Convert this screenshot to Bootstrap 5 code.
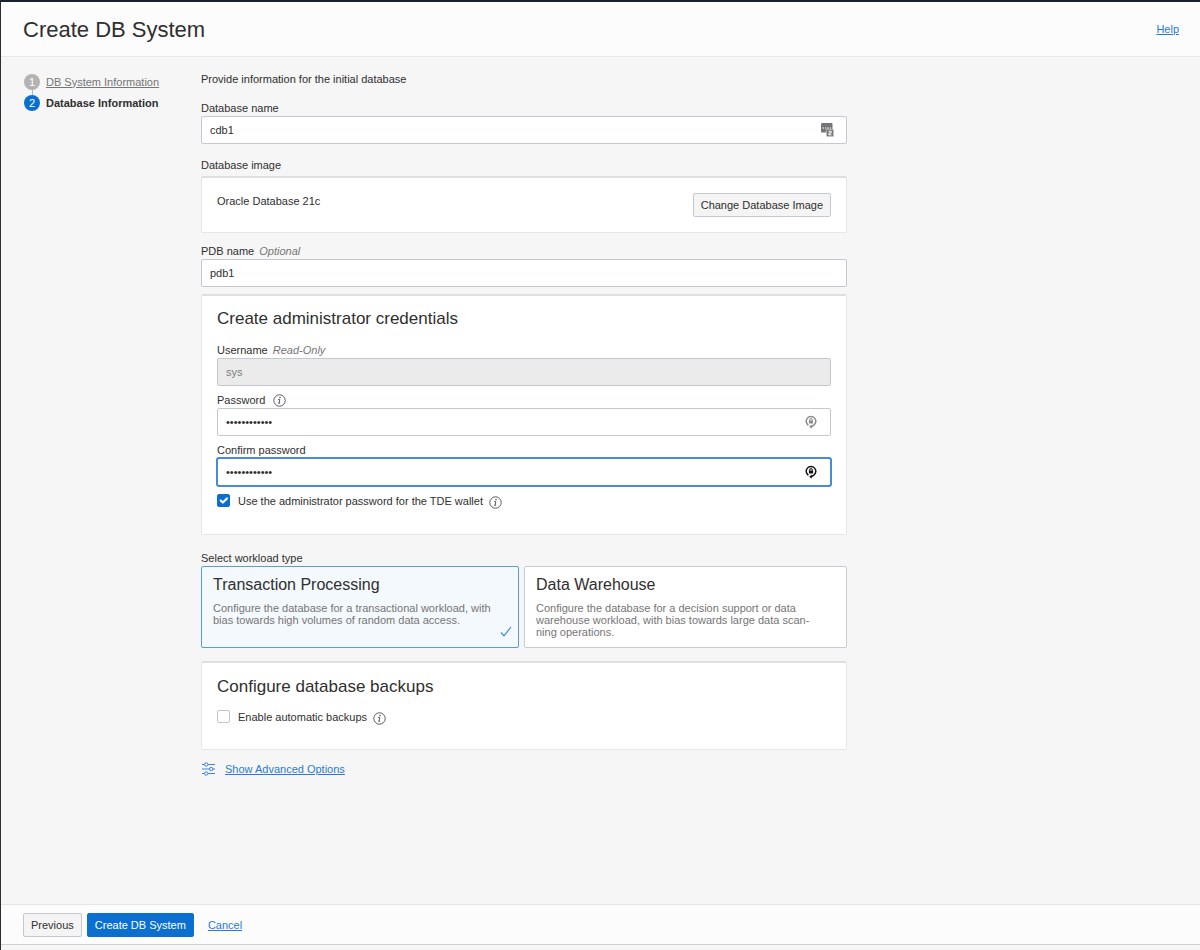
<!DOCTYPE html>
<html lang="en">
<head>
<meta charset="utf-8">
<meta name="viewport" content="width=device-width, initial-scale=1">
<title>Create DB System</title>
<link href="https://cdn.jsdelivr.net/npm/bootstrap@5.3.0/dist/css/bootstrap.min.css" rel="stylesheet">
<style>
  :root {
    --ink: #2f2f2f;
    --muted: #757575;
    --accent: #0b6fd0;
    --link: #2a7ad8;
    --page: #f6f6f6;
    --line: #e3e4e6;
  }
  body {
    font-family: "Liberation Sans", Arial, sans-serif;
    font-size: 11px;
    line-height: 16px;
    color: var(--ink);
    background: var(--page);
    border-top: 2px solid #1c2030;
    border-left: 1px solid #2b2c34;
  }
  a { color: var(--link); }
  .page-head { background: #fcfcfc; border-bottom: 1px solid #e8e8e8; padding: 12px 21px 11px 22px; }
  .page-head h1 { font-size: 22px; line-height: 31px; font-weight: 400; }
  .page-head a { padding-top: 7px; }
  .page-foot { background: #fcfcfc; border-top: 1px solid var(--line); border-bottom: 1px solid #cfcfcf; padding: 8px 22px 7px; margin-bottom: 5px; }
  .page-body { padding: 14px 22px; }

  .steps { flex: 0 0 178px; padding-left: 1px; }
  .steps li { display: flex; align-items: center; gap: 6px; height: 21px; position: relative; }
  .steps li + li::before { content: ""; position: absolute; left: 8px; top: -3px; height: 6px; border-left: 1px solid #b5b5b5; }
  .steps a { color: #757575; }
  .step-no { width: 16px; height: 16px; border-radius: 50%; background: #b3b3b3; color: #fff; text-align: center; font-size: 11px; font-weight: 400; }
  .active .step-no { background: var(--accent); }

  .wizard-form { flex: 0 1 646px; min-width: 0; }
  .field-wide { margin-top: 13px; }
  .field-mid { margin-top: 10px; }
  .field-tight { margin-top: 6px; }
  .form-label { display: block; margin: 0; font-size: 11px; }
  .hint { color: var(--muted); font-style: italic; margin-left: 2px; }
  .form-control {
    height: 28px; padding: 0 8px; font-size: 11px; line-height: 16px;
    color: var(--ink); border: 1px solid #c4c8cf; border-radius: 2px;
  }
  .form-control:disabled { background: #ebebeb; color: #7c7c7c; opacity: 1; }
  .form-control:focus, .form-control.current { border-color: #4a8bd6; box-shadow: 0 0 0 1px #4a8bd6; color: var(--ink); }
  .field-icon { position: absolute; right: 12px; top: 7px; color: #757575; }
  .key-icon { right: 14px; color: #8a8a8a; }
  .current + .key-icon { color: #111; }

  .panel { background: #fff; border: 1px solid #e6e6e6; border-top: 2px solid #dfdfe1; border-radius: 2px; padding: 15px; }
  .panel-image { margin-top: 3px; }
  .panel-admin { margin-top: 7px; padding: 13px 15px 16px; }
  .panel-backup { margin-top: 13px; padding: 14px 15px 16px; }
  .panel h2 { font-size: 17px; line-height: 20px; font-weight: 400; margin: 0; }
  .tile-title { font-size: 16px; line-height: 20px; display: block; }
  .info-btn { border: 0; background: none; padding: 0; line-height: 0; color: #5a5a5a; }
  .check-row { display: flex; align-items: center; gap: 6px; margin: 6px 0 9px; }
  .panel-backup .check-row { margin-top: 11px; margin-bottom: 8px; }
  .check-row .form-check-input { width: 13px; height: 13px; margin: 0 2px 0 0; border: 1px solid #c4c4c4; border-radius: 2px; }
  .check-row .form-check-input:checked { background-color: var(--accent); border-color: var(--accent); background-size: 14px 14px; }
  .check-row .info-btn { padding-top: 4px; }

  .btn-form { font-size: 11px; line-height: 16px; padding: 3px 7px; border-radius: 2px; background: #f4f4f4; border: 1px solid #c4c8cf; color: var(--ink); }
  .btn-go { background: var(--accent); border-color: var(--accent); color: #fff; margin-left: 5px; }
  .page-foot a { margin-left: 14px; }

  .workload { margin-top: 15px; }
  .tiles { display: grid; grid-template-columns: 318fr 323fr; gap: 5px; }
  .tile { position: relative; background: #fff; border: 1px solid #c8ccd1; border-radius: 2px; padding: 8px 11px; min-height: 82px; cursor: pointer; }
  .tile-text { color: var(--muted); line-height: 12px; margin-top: 7px; display: block; }
  .tile .tick { position: absolute; right: 6px; bottom: 10px; display: none; }
  .btn-check:checked + .tile { background: #f4f9fe; border-color: #5c9ade; }
  .btn-check:checked + .tile .tick { display: block; }
  .advanced { margin-top: 11px; }
</style>
</head>
<body class="d-flex flex-column min-vh-100">
<svg class="d-none" aria-hidden="true">
  <symbol id="i-info" viewBox="0 0 13 13">
    <circle cx="6.500" cy="6.500" r="5.700" fill="none" stroke="currentColor"/>
    <path d="M5.200 5.500h1.600L6.100 9.100M5.200 9.200h1.900" fill="none" stroke="currentColor"/>
    <circle cx="7" cy="3.600" r=".8" fill="currentColor"/>
  </symbol>
  <symbol id="i-key" viewBox="0 0 12 14">
    <path d="M3.400 10.300A4.800 4.800 0 1 1 8.600 10.300L6.400 11.700" fill="none" stroke="currentColor" stroke-width="1.500"/>
    <path d="M4.600 5.800V5a1.400 1.400 0 0 1 2.800 0v.8" fill="none" stroke="currentColor"/>
    <rect x="3.900" y="5.600" width="4.200" height="3" rx=".4" fill="currentColor"/>
    <path d="M6.800 9.600v4.200L4.200 11.700z" fill="currentColor"/>
  </symbol>
</svg>

<header class="page-head d-flex justify-content-between align-items-start">
  <h1 class="m-0">Create DB System</h1>
  <a href="#">Help</a>
</header>

<main class="page-body d-flex flex-grow-1 align-items-start">
  <nav class="steps" aria-label="Steps">
    <ol class="list-unstyled m-0">
      <li><span class="step-no">1</span><a href="#">DB System Information</a></li>
      <li class="active fw-bold"><span class="step-no">2</span><span>Database Information</span></li>
    </ol>
  </nav>

  <form class="wizard-form" id="wizard">
    <p class="mb-0">Provide information for the initial database</p>

    <div class="field-wide">
      <label class="form-label" for="dbname">Database name</label>
      <div class="position-relative">
        <input class="form-control" id="dbname" type="text" value="cdb1">
        <svg class="field-icon" width="14" height="14" viewBox="0 0 14 14" aria-hidden="true">
          <rect x="0" y="0" width="11.500" height="9.500" rx="1" fill="currentColor"/>
          <path d="M1.500 5h1.500M4 5h1.500M6.500 5H8M9 5h1" stroke="#fff" stroke-width="1.200"/>
          <rect x="5.300" y="6.300" width="7.400" height="7.400" rx="1" fill="currentColor" stroke="#fff" stroke-width=".5"/>
          <path d="M7.600 8.300h2.600v1.700H7.900v1.800h2.700" fill="none" stroke="#fff"/>
        </svg>
      </div>
    </div>

    <div class="field-wide">
      <div>Database image</div>
      <div class="panel panel-image d-flex justify-content-between align-items-start">
        <span>Oracle Database 21c</span>
        <button type="button" class="btn btn-form">Change Database Image</button>
      </div>
    </div>

    <div class="field-mid">
      <label class="form-label" for="pdbname">PDB name <span class="hint">Optional</span></label>
      <input class="form-control" id="pdbname" type="text" value="pdb1">
    </div>

    <section class="panel panel-admin">
      <h2>Create administrator credentials</h2>
      <div class="field-wide">
        <label class="form-label" for="user">Username <span class="hint">Read-Only</span></label>
        <input class="form-control" id="user" type="text" value="sys" disabled>
      </div>
      <div class="field-tight">
        <div class="d-flex align-items-center gap-2">
          <label class="form-label" for="pw">Password</label>
          <button type="button" class="info-btn" aria-label="About the password"><svg width="13" height="13"><use href="#i-info"/></svg></button>
        </div>
        <div class="position-relative">
          <input class="form-control" id="pw" type="password" value="Passw0rd#123">
          <svg class="field-icon key-icon" width="12" height="14" aria-hidden="true"><use href="#i-key"/></svg>
        </div>
      </div>
      <div class="field-tight">
        <label class="form-label" for="pw2">Confirm password</label>
        <div class="position-relative">
          <input class="form-control current" id="pw2" type="password" value="Passw0rd#123">
          <svg class="field-icon key-icon" width="12" height="14" aria-hidden="true"><use href="#i-key"/></svg>
        </div>
      </div>
      <div class="check-row">
        <input class="form-check-input" type="checkbox" id="tde" checked>
        <label for="tde">Use the administrator password for the TDE wallet</label>
        <button type="button" class="info-btn" aria-label="About the TDE wallet"><svg width="13" height="13"><use href="#i-info"/></svg></button>
      </div>
    </section>

    <fieldset class="workload">
      <legend class="form-label">Select workload type</legend>
      <div class="tiles">
        <input class="btn-check" type="radio" name="workload" id="oltp" checked>
        <label class="tile" for="oltp">
          <span class="tile-title">Transaction Processing</span>
          <span class="tile-text">Configure the database for a transactional workload, with<br>bias towards high volumes of random data access.</span>
          <svg class="tick" width="12" height="11" viewBox="0 0 12 11" aria-hidden="true"><path d="M1 6.500l3 3.300L11 1" fill="none" stroke="#3f8ae0" stroke-width="1.200"/></svg>
        </label>
        <input class="btn-check" type="radio" name="workload" id="dw">
        <label class="tile" for="dw">
          <span class="tile-title">Data Warehouse</span>
          <span class="tile-text">Configure the database for a decision support or data<br>warehouse workload, with bias towards large data scan-<br>ning operations.</span>
        </label>
      </div>
    </fieldset>

    <section class="panel panel-backup">
      <h2>Configure database backups</h2>
      <div class="check-row">
        <input class="form-check-input" type="checkbox" id="backup">
        <label for="backup">Enable automatic backups</label>
        <button type="button" class="info-btn" aria-label="About automatic backups"><svg width="13" height="13"><use href="#i-info"/></svg></button>
      </div>
    </section>

    <div class="advanced d-flex align-items-center gap-2">
      <svg width="16" height="14" viewBox="0 0 16 14" fill="none" stroke="#3f86d8" aria-hidden="true">
        <path d="M1 2.500h2.500M7 2.500h7M1 7h7.500M12 7h2M1 11.500h2.500M7 11.500h7"/>
        <circle cx="5.200" cy="2.500" r="1.700"/><circle cx="10.200" cy="7" r="1.700"/><circle cx="5.200" cy="11.500" r="1.700"/>
      </svg>
      <a href="#">Show Advanced Options</a>
    </div>
  </form>
</main>

<footer class="page-foot d-flex align-items-center">
  <button type="button" class="btn btn-form">Previous</button>
  <button type="submit" form="wizard" class="btn btn-form btn-go">Create DB System</button>
  <a href="#">Cancel</a>
</footer>
<script src="https://cdn.jsdelivr.net/npm/bootstrap@5.3.0/dist/js/bootstrap.bundle.min.js"></script>
</body>
</html>
